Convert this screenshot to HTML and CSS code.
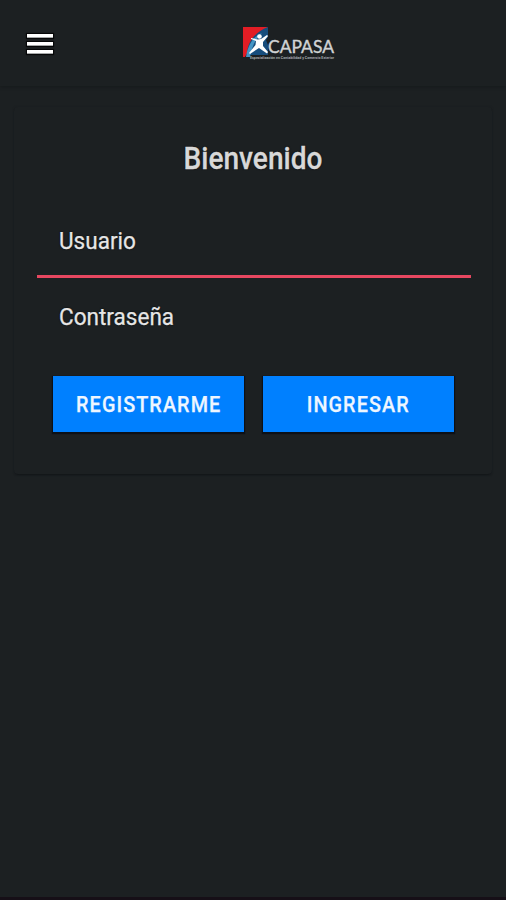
FILE: index.html
```html
<!DOCTYPE html>
<html lang="es">
<head>
<meta charset="utf-8">
<title>CAPASA</title>
<link rel="stylesheet" href="styles.css">
</head>
<body>
<header class="toolbar">
  <button class="menu" aria-label="Menú"><span></span><span></span><span></span></button>
  <svg class="logo" viewBox="0 0 94 36" role="img" aria-label="CAPASA">
    <path fill="#e21d25" d="M1 1h25L13 12 3 31H1z"/>
    <path fill="#174d7c" d="M26 1v10l-2 3 2 5v10H5C5 16 13 6 26 1z"/>
    <path fill="#4595c5" d="M4 31C6 18 12 10 20 7 13 13 10 21 8 31z"/>
    <circle cx="17.5" cy="10.5" r="2.3" fill="#fff"/>
    <path fill="#fff" d="M9 12l7 1.5 3-.5 6-4 1 1-5 6 0 4 5 6-1 1.5-8-5.500-9 6-1-1 6.500-8 .5-4-5-2z"/>
    <text class="logo-name" x="26" y="27" textLength="66" lengthAdjust="spacingAndGlyphs">CAPASA</text>
    <text class="logo-caption" x="8" y="33.2" textLength="84" lengthAdjust="spacingAndGlyphs">Especialización en Contabilidad y Comercio Exterior</text>
  </svg>
</header>
<main class="card">
  <h1>Bienvenido</h1>
  <div class="field active"><label>Usuario</label></div>
  <div class="field"><label>Contraseña</label></div>
  <div class="actions">
    <button><span>REGISTRARME</span></button>
    <button><span>INGRESAR</span></button>
  </div>
</main>
</body>
</html>
```
FILE: styles.css
```css
* { box-sizing: border-box; }
body {
  margin: 0;
  height: 900px;
  background: #1c2022;
  border-bottom: 3px solid #160f17;
  font-family: Roboto, sans-serif;
  color: #e6e6e6;
  overflow: hidden;
}
button { border: 0; padding: 0; font: inherit; color: inherit; }
.toolbar {
  height: 86px;
  padding: 0 0 0 27px;
  display: flex;
  align-items: flex-start;
  box-shadow: 0 1px 3px #161a1c;
}
.menu {
  width: 26px;
  height: 20px;
  margin-top: 34px;
  display: flex;
  flex-direction: column;
  justify-content: space-between;
  background: none;
}
.menu span {
  width: 26px;
  height: 4px;
  background: #fff;
  border-bottom: 1px solid #a5a7a8;
  box-shadow: 0 0 1px 1px #060708;
}
.logo { width: 94px; height: 36px; margin: 26px 0 0 189px; overflow: visible; }
.logo-name { font: 400 18px Lato, sans-serif; fill: #d0d3d4; stroke: #d0d3d4; stroke-width: .4px; }
.logo-caption { font: 700 3.6px Roboto, sans-serif; fill: #a5a8a9; }
.card {
  width: 478px;
  height: 367px;
  margin: 21px 14px 0;
  padding: 33px 21px 0 23px;
  border-radius: 4px;
  box-shadow: 0 2px 2px -1px #121618, 0 0 2px #191d1f;
}
h1 {
  margin: 0 1px 0 -1px;
  height: 38px;
  line-height: 38px;
  text-align: center;
  font-size: 31px;
  font-weight: 500;
  color: #d8d8d8;
  -webkit-text-stroke: .3px #d8d8d8;
  text-shadow: 0 0 2px #060708;
  transform: scaleX(.905);
}
.field {
  height: 85px;
  padding: 10px 0 0 22px;
  font-size: 24.5px;
  line-height: 32px;
}
.field.active {
  height: 62px;
  margin: 38px 0 13px;
  padding-top: 9px;
  border-bottom: 3px solid #e64760;
}
.field label {
  display: inline-block;
  -webkit-text-stroke: .25px #e6e6e6;
  text-shadow: 0 0 2px #060708;
  transform: scaleX(.92);
  transform-origin: left;
}
.actions { display: flex; gap: 19px; padding: 0 17px 0 16px; }
.actions button {
  flex: 1;
  height: 56px;
  background: #0080ff;
  color: #eef6ff;
  font-size: 22px;
  font-weight: 500;
  letter-spacing: 1.2px;
  box-shadow: 0 1px 1px 1px #0c1017;
}
.actions span {
  display: inline-block;
  -webkit-text-stroke: .25px #eef6ff;
  transform: scaleX(.9);
}
```
